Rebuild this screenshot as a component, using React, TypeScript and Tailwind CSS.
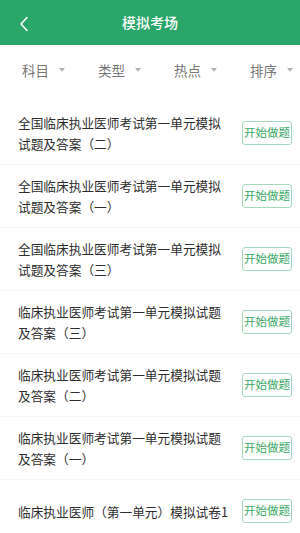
import React from 'react'

const filters = ['科目', '类型', '热点', '排序']

const papers = [
  '全国临床执业医师考试第一单元模拟试题及答案（二）',
  '全国临床执业医师考试第一单元模拟试题及答案（一）',
  '全国临床执业医师考试第一单元模拟试题及答案（三）',
  '临床执业医师考试第一单元模拟试题及答案（三）',
  '临床执业医师考试第一单元模拟试题及答案（二）',
  '临床执业医师考试第一单元模拟试题及答案（一）',
  '临床执业医师（第一单元）模拟试卷1',
]

export default function App() {
  return (
    <div className="w-[300px] h-[533px] overflow-hidden bg-white font-['Noto_Sans_CJK_SC','Noto_Sans',sans-serif]">
      {/* Header */}
      <div className="h-[45px] bg-[#2ba66a] flex items-center relative">
        <svg className="absolute left-[19px] top-[16px]" width="10" height="16" viewBox="0 0 10 16" fill="none">
          <path d="M8 1.5 L2 8 L8 14.5" stroke="white" strokeWidth="1.6" strokeLinecap="round" strokeLinejoin="round" />
        </svg>
        <div className="flex-1 text-center text-white text-[14px] font-medium">模拟考场</div>
      </div>

      {/* Filters */}
      <div className="h-[50px] flex items-center pl-[22px]">
        {filters.map((f) => (
          <div key={f} className="w-[76px] shrink-0 flex items-center text-[13.5px] text-[#777]">
            <span>{f}</span>
            <svg className="ml-[10px]" width="6" height="4" viewBox="0 0 6 4">
              <path d="M0 0 H6 L3 3.5 Z" fill="#aaa" />
            </svg>
          </div>
        ))}
      </div>

      {/* List */}
      <div className="mt-[7px]">
        {papers.map((p, i) => (
          <div key={i} className="h-[63px] flex items-center border-b border-[#f6f6f6] pl-[18px] pr-[8px]">
            <div className="w-[214px] text-[12.7px] leading-[21px] text-[#2e2e2e]">{p}</div>
            <div className="ml-auto w-[50px] h-[24px] flex items-center justify-center border border-[#a6d9bb] rounded-[3px] text-[11.5px] text-[#3aa865]">
              开始做题
            </div>
          </div>
        ))}
      </div>
    </div>
  )
}
